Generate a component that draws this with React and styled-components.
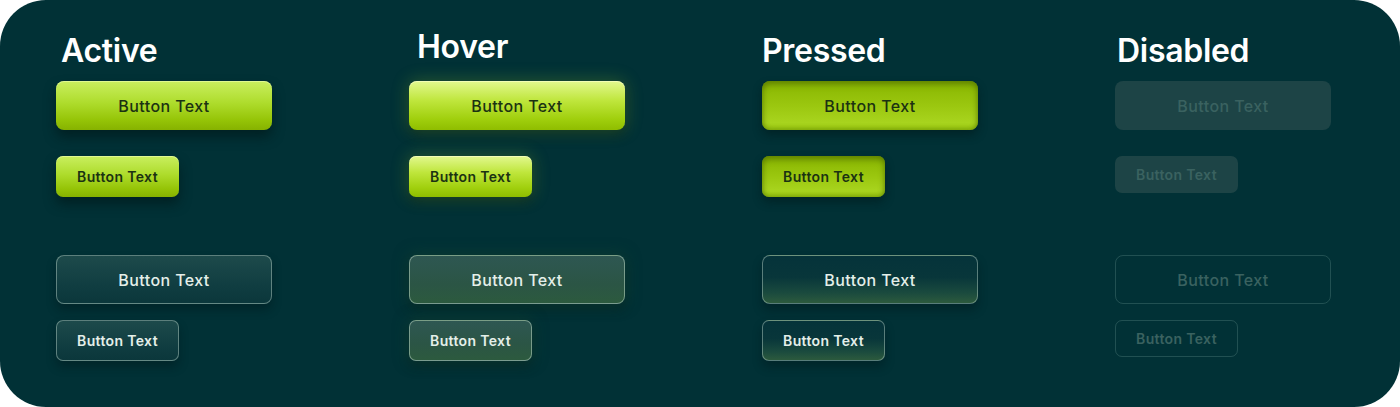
import React from "react";
import styled, { createGlobalStyle, css } from "styled-components";

const Global = createGlobalStyle`
  html, body { margin: 0; padding: 0; background: #ffffff; }
  body { font-family: Inter, "Noto Sans", sans-serif; }
`;

const Card = styled.div`
  width: 1400px;
  height: 407px;
  box-sizing: border-box;
  background: #013136;
  border-radius: 46px;
  padding: 0 0 0 56px;
  display: grid;
  grid-template-columns: repeat(4, 353px);
  overflow: hidden;
`;

const Column = styled.div`
  display: flex;
  flex-direction: column;
  align-items: flex-start;
`;

const Title = styled.h2`
  margin: ${(p) => 32 + p.$shift}px 0 ${(p) => 11 - p.$shift}px ${(p) => p.$left}px;
  font-family: Inter, "Noto Sans", sans-serif;
  font-weight: 600;
  font-size: 32px;
  line-height: 38px;
  letter-spacing: -0.3px;
  color: #ffffff;
  white-space: nowrap;
`;

const sizes = {
  lg: css`
    width: 216px;
    height: 49px;
    border-radius: 8px;
    font-size: 16px;
    font-weight: 500;
    letter-spacing: 0.4px;
  `,
  sm: css`
    width: 123px;
    height: 41px;
    border-radius: 7px;
    font-size: 14px;
    font-weight: 600;
    letter-spacing: 0.35px;
  `,
};

const variants = {
  active: css`
    color: #1b3212;
    background: linear-gradient(180deg, #c9ef5f 0%, #aedc2c 45%, #95c407 80%, #86b200 100%);
    box-shadow: 0 7px 12px rgba(0, 20, 20, 0.55), inset 0 1px 0 rgba(240, 255, 180, 0.6);
  `,
  hover: css`
    color: #1b3212;
    background: linear-gradient(180deg, #e2f88f 0%, #bfe63c 40%, #a0cf0d 78%, #8fbd00 100%);
    box-shadow: 0 0 16px 2px rgba(130, 180, 40, 0.28), 0 6px 10px rgba(0, 20, 20, 0.4),
      inset 0 1px 0 rgba(250, 255, 200, 0.7);
  `,
  pressed: css`
    color: #1b3212;
    background: linear-gradient(180deg, #88b500 0%, #9bc70f 50%, #a8d41e 85%, #9fcc14 100%);
    box-shadow: inset 0 3px 6px rgba(80, 110, 0, 0.75), inset 0 -2px 4px rgba(110, 150, 0, 0.5),
      0 5px 10px rgba(0, 20, 20, 0.45);
  `,
  disabled: css`
    color: #3a6260;
    background: #1d4446;
  `,
  ghost: css`
    color: #e4efe9;
    background: linear-gradient(180deg, #1d4a4b 0%, #0f3c40 70%, #0b373b 100%);
    border: 1px solid rgba(190, 215, 205, 0.45);
    box-shadow: 0 6px 10px rgba(0, 18, 20, 0.35);
  `,
  ghostHover: css`
    color: #e4efe9;
    background: linear-gradient(180deg, #2e5752 0%, #2b5545 60%, #2c5a3e 100%);
    border: 1px solid rgba(200, 225, 205, 0.5);
    box-shadow: 0 0 14px 2px rgba(20, 70, 50, 0.5), 0 6px 10px rgba(0, 18, 20, 0.35);
  `,
  ghostPressed: css`
    color: #e4efe9;
    background: linear-gradient(180deg, #05333a 0%, #08363a 45%, #1a4a3e 78%, #2c5a3d 100%);
    border: 1px solid rgba(190, 215, 205, 0.45);
    box-shadow: 0 6px 10px rgba(0, 18, 20, 0.35);
  `,
  ghostDisabled: css`
    color: #3a6260;
    background: transparent;
    border: 1px solid rgba(150, 190, 180, 0.22);
  `,
};

const Btn = styled.button`
  box-sizing: border-box;
  display: flex;
  align-items: center;
  justify-content: center;
  border: none;
  padding: 0;
  font-family: Inter, "Noto Sans", sans-serif;
  cursor: pointer;
  ${(p) => sizes[p.$size]}
  ${(p) => variants[p.$variant]}
  ${(p) => p.$short && css`height: ${p.$size === "lg" ? 49 : 37}px;`}
  margin-top: ${(p) => p.$gap}px;
`;

const columns = [
  { title: "Active", shift: 0, left: 5, filled: "active", ghost: "ghost" },
  { title: "Hover", shift: -4, left: 8, filled: "hover", ghost: "ghostHover" },
  { title: "Pressed", shift: 0, left: 0, filled: "pressed", ghost: "ghostPressed" },
  { title: "Disabled", shift: 0, left: 2, filled: "disabled", ghost: "ghostDisabled", disabled: true },
];

export default function App() {
  return (
    <>
      <Global />
      <Card>
        {columns.map((c) => (
          <Column key={c.title}>
            <Title $shift={c.shift} $left={c.left}>{c.title}</Title>
            <Btn $size="lg" $variant={c.filled} $gap={0}>Button Text</Btn>
            <Btn $size="sm" $variant={c.filled} $gap={26} $short={c.disabled}>Button Text</Btn>
            <Btn $size="lg" $variant={c.ghost} $gap={c.disabled ? 62 : 58}>
              Button Text
            </Btn>
            <Btn $size="sm" $variant={c.ghost} $gap={16} $short={c.disabled}>
              Button Text
            </Btn>
          </Column>
        ))}
      </Card>
    </>
  );
}
